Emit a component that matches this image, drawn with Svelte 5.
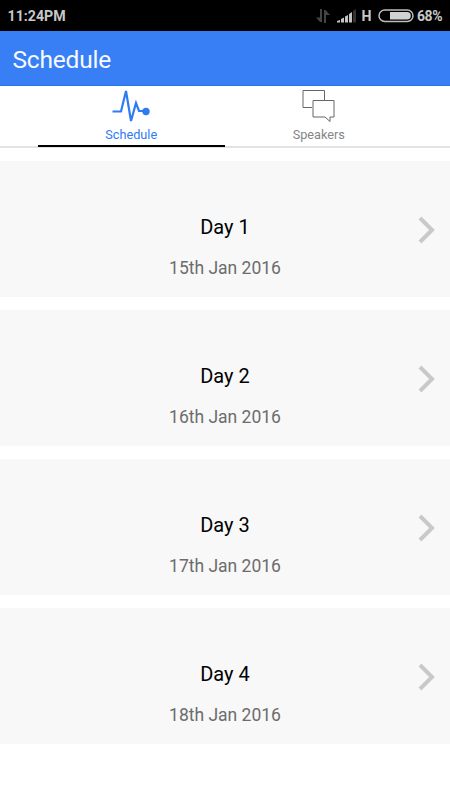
<script lang="ts">
let active = 'schedule';

const days = [
  { title: 'Day 1', date: '15th Jan 2016' },
  { title: 'Day 2', date: '16th Jan 2016' },
  { title: 'Day 3', date: '17th Jan 2016' },
  { title: 'Day 4', date: '18th Jan 2016' }
];
</script>

<div class="app">
  <div class="status">
    <span class="time">11:24PM</span>
    <div class="indicators">
      <svg class="data" width="14" height="14" viewBox="0 0 14 14">
        <path d="M4 0h2v13H4L0 8.5h4zM8 1h1.5L14 6h-4v8H8z" fill="#444" />
      </svg>
      <svg class="signal" width="20" height="14" viewBox="0 0 20 14">
        <path d="M0 13.5V12l3-1v2.5zM4 13.5V10l3-1.5v5zM8 13.5v-6L11 6v7.5zM12 13.5V5l3-2v10.5z" fill="#c4c4c4" />
        <path d="M16 13.5V2l3-2v13.5z" fill="#333" />
      </svg>
      <span class="network">H</span>
      <svg class="battery" width="36" height="14" viewBox="0 0 36 14">
        <rect x="1" y="1" width="34" height="11.5" rx="5.75" fill="none" stroke="#bdbdbd" stroke-width="1.5" />
        <path d="M12 3h17a3.75 3.75 0 0 1 0 7.5H12z" fill="#d2d2d2" />
      </svg>
      <span class="percent">68%</span>
    </div>
  </div>

  <header><h1>Schedule</h1></header>

  <nav>
    <button class="tab" class:active={active === 'schedule'} on:click={() => (active = 'schedule')}>
      <svg width="40" height="36" viewBox="0 0 40 36">
        <path d="M1.5 23.5H10L15 3l5 30 5-18 3 8h7" fill="none" stroke="currentColor" stroke-width="2.2" />
        <circle cx="35" cy="23.5" r="3.7" fill="currentColor" />
      </svg>
      <span>Schedule</span>
    </button>
    <button class="tab" class:active={active === 'speakers'} on:click={() => (active = 'speakers')}>
      <svg width="40" height="36" viewBox="0 0 40 36">
        <path d="M13 19.5H4v-17h21.5V12" fill="none" stroke="#666" />
        <path d="M14 12.5h21V29h-4v4.500L26 29H14z" fill="none" stroke="#666" />
      </svg>
      <span>Speakers</span>
    </button>
  </nav>

  <main>
    {#each days as day}
      <div class="card">
        <div class="text">
          <h2>{day.title}</h2>
          <p>{day.date}</p>
        </div>
        <svg class="chevron" width="18" height="28" viewBox="0 0 18 28">
          <path d="M2 2l12 12L2 26" fill="none" stroke="#c9c9c9" stroke-width="4" />
        </svg>
      </div>
    {/each}
  </main>
</div>

<style>
:global(body) {
  margin: 0;
  background: #fff;
}
.app {
  height: 800px;
  overflow: hidden;
  font-family: Roboto, sans-serif;
}
.status {
  display: flex;
  align-items: center;
  justify-content: space-between;
  box-sizing: border-box;
  height: 31px;
  padding: 1px 8px 0 7.5px;
  background: #000;
  color: #c8c8c8;
  font-size: 14.2px;
  font-weight: 700;
}
.indicators {
  display: flex;
  align-items: center;
}
.signal {
  margin-left: 7px;
}
.network {
  margin-left: 5px;
}
.battery {
  margin: 0 3.5px 0 6px;
}
.percent {
  font-size: 14px;
  letter-spacing: -0.5px;
}
header {
  display: flex;
  align-items: center;
  box-sizing: border-box;
  height: 55px;
  padding: 2px 12.5px 0;
  background: #387ff5;
  border-bottom: 1px solid #2872ea;
}
h1 {
  margin: 0;
  color: #f6f9ff;
  font-size: 24.5px;
  font-weight: 400;
  letter-spacing: -0.2px;
}
nav {
  display: flex;
  box-sizing: border-box;
  height: 62px;
  padding: 0 37.5px;
  border-bottom: 2px solid #e3e3e3;
}
.tab {
  display: flex;
  flex: 1;
  flex-direction: column;
  align-items: center;
  height: 61px;
  padding: 2px 0 0;
  border: none;
  border-bottom: 2px solid transparent;
  box-sizing: border-box;
  background: none;
  color: #858585;
  font-family: inherit;
  font-size: 12.7px;
  line-height: 16px;
  cursor: pointer;
}
.tab span {
  margin-top: 3px;
}
.tab.active {
  color: #2f7bf3;
  border-bottom-color: #000;
}
main {
  display: flex;
  flex-direction: column;
  gap: 13px;
  padding-top: 13px;
}
.card {
  display: grid;
  grid-template-columns: 34px 1fr 34px;
  height: 136px;
  background: #f8f8f8;
}
.text {
  grid-column: 2;
  padding-top: 54px;
  text-align: center;
}
h2 {
  margin: 0;
  color: #000;
  font-size: 20px;
  font-weight: 400;
  line-height: 24px;
}
p {
  margin: 18px 0 0;
  color: #6c6c6c;
  font-size: 17.5px;
  line-height: 22px;
}
.chevron {
  margin: 55px 0 0 1.5px;
}
</style>
